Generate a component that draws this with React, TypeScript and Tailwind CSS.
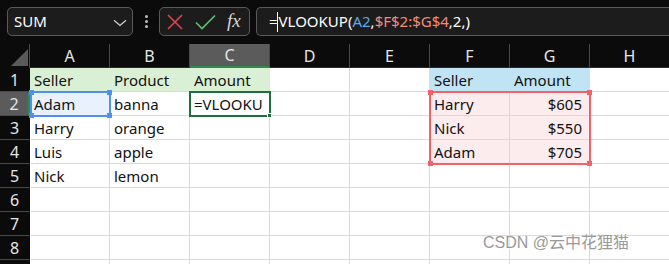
import React from "react";

const cols = ["A", "B", "C", "D", "E", "F", "G", "H"];

type Cell = { t?: string; right?: boolean };

function cellFor(r: number, c: number): Cell {
  const data: Record<string, string> = {
    "1-0": "Seller", "1-1": "Product", "1-2": "Amount", "1-5": "Seller", "1-6": "Amount",
    "2-0": "Adam", "2-1": "banna", "2-2": "=VLOOKU", "2-5": "Harry", "2-6": "$605",
    "3-0": "Harry", "3-1": "orange", "3-5": "Nick", "3-6": "$550",
    "4-0": "Luis", "4-1": "apple", "4-5": "Adam", "4-6": "$705",
    "5-0": "Nick", "5-1": "lemon",
  };
  const t = data[`${r}-${c}`];
  const cell: Cell = { t };
  if (r >= 2 && r <= 4 && c === 6) cell.right = true;
  return cell;
}

function bgClass(r: number, c: number) {
  if (r === 1 && c <= 2) return "bg-[#daf0d4] border-r-[#daf0d4]";
  if (r === 1 && (c === 5 || c === 6)) return "bg-[#c1e4f5] border-r-[#c1e4f5]";
  if (r === 2 && c === 0) return "bg-[#e9f1fd] border-r-[#d9d9d9]";
  if (r >= 2 && r <= 4 && (c === 5 || c === 6)) return "bg-[#fdeced] border-r-[#ead2d3]";
  return "bg-white border-r-[#dadada]";
}

export default function App() {
  const rows = [1, 2, 3, 4, 5, 6, 7, 8, 9];
  return (
    <div
      className="relative w-[669px] h-[264px] overflow-hidden bg-[#0b0b0b] text-[15px]"
      style={{ fontFamily: '"Noto Sans", "Liberation Sans", sans-serif' }}
    >
      {/* Top formula bar */}
      <div className="flex items-center h-[44px] pl-[7px] pb-[1px]">
        <div className="flex items-center justify-between w-[126px] h-[29px] rounded-[5px] border border-[#5a5a5a] bg-[#1c1c1c] pl-[6px] pr-[5px]">
          <span className="text-white leading-none">SUM</span>
          <svg width="14" height="8" viewBox="0 0 14 8" className="mt-[2px]">
            <path d="M1 1.2 L7 6.5 L13 1.2" stroke="#cfcfcf" strokeWidth="1.3" fill="none" />
          </svg>
        </div>
        <div className="flex flex-col items-center gap-[2px] w-[26px]">
          <span className="block w-[3px] h-[3px] rounded-full bg-[#bdbdbd]" />
          <span className="block w-[3px] h-[3px] rounded-full bg-[#bdbdbd]" />
          <span className="block w-[3px] h-[3px] rounded-full bg-[#bdbdbd]" />
        </div>
        <div className="flex items-center w-[91px] h-[29px] rounded-[5px] border border-[#5a5a5a] bg-[#1c1c1c] pl-[7px]">
          <svg width="16" height="16" viewBox="0 0 16 16">
            <path d="M1 1 L15 15 M15 1 L1 15" stroke="#e2434b" strokeWidth="1.6" fill="none" />
          </svg>
          <svg width="21" height="16" viewBox="0 0 21 16" className="ml-[12px]">
            <path d="M1 8.5 L7 14.5 L20 1.5" stroke="#5cc46d" strokeWidth="1.6" fill="none" />
          </svg>
          <span
            className="ml-[11px] text-[#d6d6d6] italic text-[19px] leading-none -mt-[2px]"
            style={{ fontFamily: '"Liberation Serif", "DejaVu Serif", serif' }}
          >
            fx
          </span>
        </div>
        <div className="relative flex items-center flex-1 h-[29px] ml-[6px] rounded-l-[5px] border border-r-0 border-[#5a5a5a] bg-[#1c1c1c] pl-[12px] text-[15px] leading-none">
          <span className="text-white">=</span>
          <span className="inline-block w-[1px] h-[20px] bg-white mr-[1px] -ml-[1px]" />
          <span className="text-white">VLOOKUP(</span>
          <span className="text-[#5aa9ea]">A2</span>
          <span className="text-white">,</span>
          <span className="text-[#f48a78]">$F$2:$G$4</span>
          <span className="text-white">,2,)</span>
        </div>
      </div>

      {/* Sheet grid */}
      <div className="grid grid-cols-[30px_repeat(8,80px)] grid-rows-[24px_repeat(9,24px)]">
        {/* corner */}
        <div className="relative bg-[#0b0b0b] border-r border-[#4a4a4a]">
          <svg width="17" height="17" viewBox="0 0 17 17" className="absolute left-[11px] top-[5px]">
            <path d="M0 17 L17 0 L17 17 Z" fill="#5a5a5a" />
          </svg>
        </div>
        {cols.map((c, i) => (
          <div
            key={c}
            className={
              "flex items-center justify-center text-[16px] border-r border-[#4a4a4a] " +
              (i === 2
                ? "bg-[#5b5b5b] text-[#e6e6e6] border-b-2 border-b-[#2f8a4f]"
                : "bg-[#0b0b0b] text-[#e6e6e6] border-b border-b-[#2a2a2a]")
            }
          >
            {c}
          </div>
        ))}
        {rows.map((r) => (
          <React.Fragment key={r}>
            <div
              className={
                "flex items-center justify-center text-[16px] border-b border-[#4a4a4a] " +
                (r === 2
                  ? "bg-[#5b5b5b] text-[#e6e6e6] border-r-2 border-r-[#2f8a4f]"
                  : "bg-[#0b0b0b] text-[#e6e6e6] border-r border-r-[#0b0b0b]")
              }
            >
              {r < 9 ? r : ""}
            </div>
            {cols.map((_, ci) => {
              const cell = cellFor(r, ci);
              return (
                <div
                  key={ci}
                  className={
                    "flex items-center overflow-hidden whitespace-nowrap border-r border-b border-b-[#dadada] text-[#111] leading-none pt-[1px] " +
                    bgClass(r, ci) +
                    (cell.right ? " justify-end pr-[7px]" : " pl-[4px]")
                  }
                >
                  {cell.t}
                </div>
              );
            })}
          </React.Fragment>
        ))}
      </div>

      {/* A2 blue reference highlight */}
      <div className="absolute left-[30px] top-[91px] w-[81px] h-[26px] border-2 border-[#4e8ff0] pointer-events-none">
        <span className="absolute -left-[3px] -top-[3px] w-[5px] h-[5px] bg-[#4e8ff0]" />
        <span className="absolute -right-[3px] -top-[3px] w-[5px] h-[5px] bg-[#4e8ff0]" />
        <span className="absolute -left-[3px] -bottom-[3px] w-[5px] h-[5px] bg-[#4e8ff0]" />
        <span className="absolute -right-[3px] -bottom-[3px] w-[5px] h-[5px] bg-[#4e8ff0]" />
      </div>

      {/* F2:G4 red reference highlight */}
      <div className="absolute left-[429px] top-[91px] w-[162px] h-[74px] border-2 border-[#f3616b] pointer-events-none">
        <span className="absolute -left-[3px] -top-[3px] w-[5px] h-[5px] bg-[#f3616b]" />
        <span className="absolute -right-[3px] -top-[3px] w-[5px] h-[5px] bg-[#f3616b]" />
        <span className="absolute -left-[3px] -bottom-[3px] w-[5px] h-[5px] bg-[#f3616b]" />
        <span className="absolute -right-[3px] -bottom-[3px] w-[5px] h-[5px] bg-[#f3616b]" />
      </div>

      {/* Active cell C2 */}
      <div className="absolute left-[189px] top-[91px] w-[82px] h-[26px] border-2 border-[#1f6e40] pointer-events-none">
        <span className="absolute -right-[3px] -bottom-[3px] w-[5px] h-[5px] bg-[#1f6e40] border border-white" />
      </div>

      {/* Watermark */}
      <div
        className="absolute left-[483px] top-[235px] text-[16px] text-[#9a9a9a] leading-none"
        style={{
          fontFamily: '"Liberation Sans", "Noto Sans CJK SC", sans-serif',
          textShadow: "1px 1px 0 #ffffff",
        }}
      >
        CSDN @云中花狸猫
      </div>
    </div>
  );
}
